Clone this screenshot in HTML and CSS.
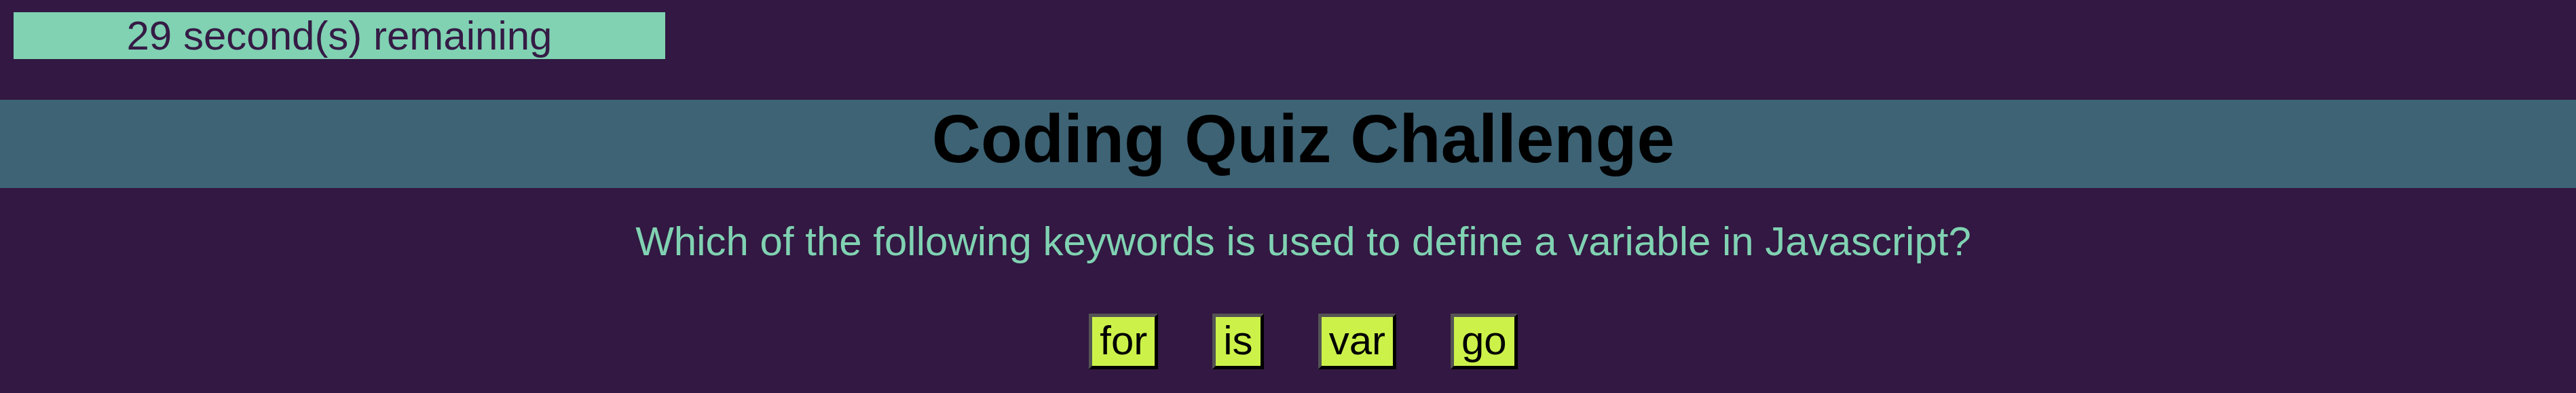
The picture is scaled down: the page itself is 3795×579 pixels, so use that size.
FILE: index.html
```html
<!DOCTYPE html>
<html lang="en">
<head>
<meta charset="utf-8">
<title>Coding Quiz Challenge</title>
<link rel="stylesheet" href="styles.css">
</head>
<body>
  <div class="timer">29 second(s) remaining</div>
  <header class="banner">
    <h1 class="title">Coding Quiz Challenge</h1>
  </header>
  <main class="quiz">
    <p class="question">Which of the following keywords is used to define a variable in Javascript?</p>
    <div class="answers">
      <button class="answer">for</button>
      <button class="answer">is</button>
      <button class="answer">var</button>
      <button class="answer">go</button>
    </div>
  </main>
</body>
</html>
```

FILE: styles.css
```css
html, body {
  margin: 0;
  padding: 0;
}

body {
  background: #321842;
  font-family: "Liberation Sans", Arial, sans-serif;
  min-height: 579px;
  overflow: hidden;
}

.timer {
  margin: 18px 0 0 20px;
  width: 960px;
  height: 69px;
  line-height: 69px;
  background: #80d2b2;
  color: #351b45;
  font-size: 60px;
  text-align: center;
}

.banner {
  margin-top: 60px;
  height: 130px;
  background: #3d6375;
  padding-left: 45px;
  box-sizing: border-box;
}

.title {
  margin: 0;
  font-size: 100px;
  font-weight: bold;
  line-height: 115px;
  color: #000;
  text-align: center;
}

.quiz {
  padding-left: 45px;
}

.question {
  margin: 44px 0 0;
  font-size: 60px;
  line-height: 69px;
  color: #80d2b2;
  text-align: center;
}

.answers {
  margin-top: 72px;
  display: flex;
  justify-content: center;
  gap: 80px;
}

.answer {
  font-family: "Liberation Sans", Arial, sans-serif;
  font-size: 60px;
  line-height: 69px;
  padding: 0 11px 3px;
  margin: 0;
  background: #ccf24a;
  color: #000;
  border-width: 5px;
  border-style: solid;
  border-color: #545454 #000 #000 #545454;
  border-radius: 0;
  cursor: pointer;
}
```
